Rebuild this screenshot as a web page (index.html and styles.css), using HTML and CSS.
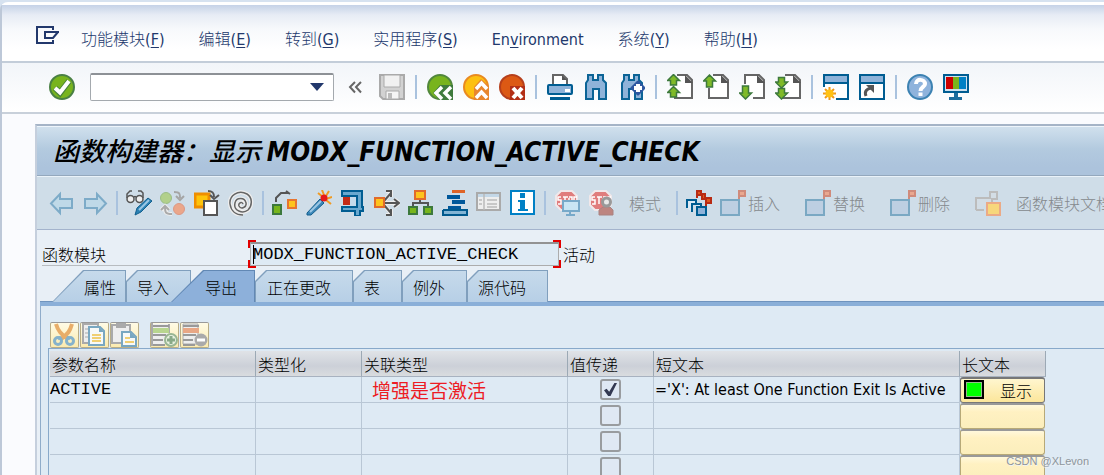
FILE: index.html
```html
<!DOCTYPE html>
<html lang="zh-CN">
<head>
<meta charset="utf-8">
<title>函数构建器</title>
<link rel="stylesheet" href="styles.css">
</head>
<body>
<svg class="defs" aria-hidden="true">
  <defs>
    <symbol id="page" viewBox="0 0 26 26"><path d="M10 1H20L25 6V24H7" fill="#fff" stroke="#666" stroke-width="2"/><path d="M18 1L26 9H18Z" fill="#555"/></symbol>
    <symbol id="flag" viewBox="0 0 26 26"><rect x="1" y="10" width="18" height="15" fill="#bdcfe2" stroke="#7aa8c3" stroke-width="2"/><path d="M19 9V1H25V6H19" fill="#e9a890" stroke="#d08b7b" stroke-width="2"/></symbol>
    <g id="up"><path d="M6.500 0.500L12.500 6.500H9.500V11H3.500V6.500H0.500Z" fill="#7fba28" stroke="#3d793c" stroke-width="1.500"/></g>
    <g id="down"><path d="M6.500 11L12.500 5H9.500V0.500H3.500V5H0.500Z" fill="#7fba28" stroke="#3d793c" stroke-width="1.500"/></g>
  </defs>
</svg>

<div class="window">
  <nav class="menubar">
    <button class="menu-icon" aria-label="菜单"><svg viewBox="0 0 24 19"><path d="M17 4V1H1V17H17V14M23 6H9V12H17L22 6" fill="none" stroke="#22386c" stroke-width="2"/></svg></button>
    <button>功能模块<span>(<u>F</u>)</span></button>
    <button>编辑<span>(<u>E</u>)</span></button>
    <button>转到<span>(<u>G</u>)</span></button>
    <button>实用程序<span>(<u>S</u>)</span></button>
    <button><span>En<u>v</u>ironment</span></button>
    <button>系统<span>(<u>Y</u>)</span></button>
    <button>帮助<span>(<u>H</u>)</span></button>
  </nav>

  <div class="sysbar">
    <button class="ic" aria-label="确认"><svg viewBox="0 0 26 26"><circle cx="13" cy="13" r="12" fill="#78b41e" stroke="#4a8044" stroke-width="2"/><path d="M6 14L11 19L20 7" fill="none" stroke="#47803b" stroke-width="6"/><path d="M6 14L11 18.500L20 7" fill="none" stroke="#fff" stroke-width="4"/></svg></button>
    <div class="combo"><input aria-label="命令"><button aria-label="历史"><svg viewBox="0 0 14 8"><path d="M0 0H14L7 8Z" fill="#22386c"/></svg></button></div>
    <button class="ic narrow" aria-label="收起"><svg viewBox="0 0 16 26"><path d="M8 8L3 13L8 18.500M14 8L9 13L14 18.500" fill="none" stroke="#666" stroke-width="2"/></svg></button>
    <button class="ic" aria-label="保存"><svg viewBox="0 0 26 26"><path d="M1 1H25V25H4L1 22Z" fill="#d2d2d2" stroke="#aaa" stroke-width="2"/><path d="M5 1H21V13H5Z" fill="#f1f1f1" stroke="#aaa"/><path d="M7 17H20V25H7Z" fill="#f5f5f5" stroke="#aaa"/><path d="M9 19H13V25H9Z" fill="#bbb"/></svg></button>
    <i class="sep"></i>
    <button class="ic" aria-label="返回"><svg viewBox="0 0 26 26"><circle cx="13" cy="13" r="12" fill="#78b41e" stroke="#51873c" stroke-width="2"/><path d="M6 19L13 11H26V26H13Z" fill="#3f7b3d"/><path d="M15 13L9 19L15 25M24 13L18 19L24 25" fill="none" stroke="#fff" stroke-width="3.500"/></svg></button>
    <button class="ic" aria-label="退出"><svg viewBox="0 0 26 26"><circle cx="13" cy="13" r="12" fill="#fdc010" stroke="#e98a20" stroke-width="2"/><path d="M11 13L18 5L26 12V26H11Z" fill="#e8862d"/><path d="M13 15L18.500 9L24 15M13 24L18.500 18L24 24" fill="none" stroke="#fff" stroke-width="3.500"/></svg></button>
    <button class="ic" aria-label="取消"><svg viewBox="0 0 26 26"><circle cx="13" cy="13" r="12" fill="#dc5914" stroke="#b63f1b" stroke-width="2"/><path d="M11 12H26V26H11Z" fill="#b32f16"/><path d="M14 14L23 24M23 14L14 24" stroke="#fff" stroke-width="4"/></svg></button>
    <i class="sep"></i>
    <button class="ic" aria-label="打印"><svg viewBox="0 0 26 26"><path d="M6 10V1H16L20 5V10" fill="#fff" stroke="#666" stroke-width="2"/><path d="M15 1V6H20Z" fill="#555"/><rect x="1" y="11" width="24" height="9" rx="1" fill="#8fb3d9" stroke="#005d92" stroke-width="2"/><path d="M18 15H23V18H18Z" fill="#fff"/><path d="M3 23H23V26H3Z" fill="#005d92"/></svg></button>
    <button class="ic" aria-label="查找"><svg viewBox="0 0 26 26"><path id="bino" d="M5 1H10V6H15V1H20V6L23 9V25H16V15H10V25H3V9L5 6Z" fill="#8fb3d9" stroke="#0c6496" stroke-width="2"/></svg></button>
    <button class="ic" aria-label="继续查找"><svg viewBox="0 0 26 26"><use href="#bino"/><path d="M19 8L25 14L19 20L13 14Z" fill="#fff" stroke="#2d57a0" stroke-width="3" stroke-linejoin="round"/><path d="M19 10V18M15 14H23" stroke="#fff" stroke-width="4"/></svg></button>
    <i class="sep"></i>
    <button class="ic" aria-label="首页"><svg viewBox="0 0 26 26"><use href="#page"/><path d="M4 8H10V14H4Z" fill="#fff"/><use href="#up"/><use href="#up" y="12"/></svg></button>
    <button class="ic" aria-label="上页"><svg viewBox="0 0 26 26"><use href="#page"/><path d="M6 14V24H14" fill="#fff" stroke="#666" stroke-width="2"/><path d="M6.500 1L12.500 7H9.500V13H3.500V7H0.500Z" fill="#7fba28" stroke="#3d793c" stroke-width="1.500"/></svg></button>
    <button class="ic" aria-label="下页"><svg viewBox="0 0 26 26"><path d="M6 10V1H20L25 6V24H14" fill="#fff" stroke="#666" stroke-width="2"/><path d="M18 1L26 9H18Z" fill="#555"/><path d="M6.500 25L12.500 19H9.500V12H3.500V19H0.500Z" fill="#7fba28" stroke="#3d793c" stroke-width="1.500"/></svg></button>
    <button class="ic" aria-label="末页"><svg viewBox="0 0 26 26"><use href="#page"/><path d="M4 8H10V14H4Z" fill="#fff"/><use href="#down" y="3"/><use href="#down" y="14"/></svg></button>
    <i class="sep"></i>
    <button class="ic" aria-label="新会话"><svg viewBox="0 0 26 26"><path d="M1 14V1H25V25H13" fill="#fff" stroke="#005d92" stroke-width="2"/><path d="M2 2H24V9H2Z" fill="#8fb3d9"/><path d="M1 9H25" stroke="#005d92" stroke-width="2"/><path d="M0 13H12V26H0Z" fill="#fff"/><path d="M6.500 13V26M0 19.500H13M2 15L11 24M11 15L2 24" stroke="#f09818" stroke-width="2"/><circle cx="6.500" cy="19.500" r="4" fill="#ffc214"/></svg></button>
    <button class="ic" aria-label="快捷方式"><svg viewBox="0 0 26 26"><path d="M1 1H25V25H1Z" fill="#fff" stroke="#005d92" stroke-width="2"/><path d="M2 2H24V8H2Z" fill="#8fb3d9"/><path d="M1 9H25" stroke="#005d92" stroke-width="2"/><path d="M7 22C5 17 8 15 12 14" fill="none" stroke="#555" stroke-width="3"/><path d="M7 11H15V19Z" fill="#555"/></svg></button>
    <i class="sep"></i>
    <button class="ic" aria-label="帮助"><svg viewBox="0 0 26 26"><circle cx="13" cy="13" r="12" fill="#8fb3dc" stroke="#3c82b2" stroke-width="2"/><path d="M9 10C9 4 18 5 18 10C18 13 13.500 13 13.500 17M13.500 18.500V22" fill="none" stroke="#fff" stroke-width="4"/></svg></button>
    <button class="ic" aria-label="布局"><svg viewBox="0 0 26 26"><path d="M1 1H25V18H1Z" fill="#cfe1ef" stroke="#005d92" stroke-width="2"/><path d="M3 3H10V15H3Z" fill="#c00"/><path d="M10 3H16V15H10Z" fill="#7ab51d"/><path d="M16 3H23V15H16Z" fill="#0080c5"/><path d="M11 19H15V23H19V26H6V23H11Z" fill="#1d6d9e"/></svg></button>
  </div>

  <main class="main">
    <h1>函数构建器：显示 <span>MODX_FUNCTION_ACTIVE_CHECK</span></h1>

    <div class="appbar">
      <button class="ic" aria-label="后退"><svg viewBox="0 0 26 26"><path d="M3 13.500L12 4V9H24V18H12V23Z" fill="#bfd9e8" stroke="#7dabc8" stroke-width="2"/></svg></button>
      <button class="ic" aria-label="前进"><svg viewBox="0 0 26 26"><path d="M24 13.500L15 4V9H3V18H15V23Z" fill="#bfd9e8" stroke="#7dabc8" stroke-width="2"/></svg></button>
      <i class="sep"></i>
      <button class="ic" aria-label="显示/更改"><svg viewBox="0 0 26 26"><g fill="#eee" stroke="#555" stroke-width="1.500"><path d="M1 8V4L4 1H6M17 8V3L15 1H12M7 8Q9 5 11 8" fill="none"/><circle cx="4.500" cy="9" r="3.500"/><circle cx="13.500" cy="9" r="3.500"/></g><path d="M9 25L11 18L22 8L26 11L15 22Z" fill="#2c82b4" stroke="#135f8e"/><path d="M13 20L23 10" stroke="#9cc7e4" stroke-width="2"/></svg></button>
      <button class="ic" aria-label="激活切换"><svg viewBox="0 0 26 26"><circle cx="6" cy="8" r="5.500" fill="#b2d08b" stroke="#9bbd86"/><circle cx="19" cy="19" r="5.500" fill="#eba68a" stroke="#dc9885"/><path d="M14 2C20 2 20 4 20 8M16 6L20 10L24 6" fill="none" stroke="#a5a5a5" stroke-width="2"/><path d="M12 24C5 24 5 22 5 17M1 20L5 16L9 20" fill="none" stroke="#eee" stroke-width="4"/><path d="M12 24C5 24 5 22 5 17M1 20L5 16L9 20" fill="none" stroke="#aaa" stroke-width="2"/></svg></button>
      <button class="ic" aria-label="其他对象"><svg viewBox="0 0 26 26"><path d="M1 4H15V17H1Z" fill="#fec40b" stroke="#ef8e00" stroke-width="3"/><path d="M10 11H23V25H10Z" fill="#fff" stroke="#555" stroke-width="2"/><path d="M14 1C19 1 20 3 20 7M16 5L20 9L25 5" fill="none" stroke="#555" stroke-width="2"/></svg></button>
      <button class="ic" aria-label="增强"><svg viewBox="0 0 26 26"><path d="M15 14C14 11 10 13 11 16C13 20 19 17 18 13C17 7 8 7 7 13C5 21 15 24 20 20C25 15 24 7 19 4C10 -1 1 6 2 14C3 21 8 25 15 25" fill="none" stroke="#eee" stroke-width="4"/><path d="M15 14C14 11 10 13 11 16C13 20 19 17 18 13C17 7 8 7 7 13C5 21 15 24 20 20C25 15 24 7 19 4C10 -1 1 6 2 14C3 21 8 25 15 25" fill="none" stroke="#666" stroke-width="1.500"/></svg></button>
      <i class="sep"></i>
      <button class="ic" aria-label="检查"><svg viewBox="0 0 26 26"><path d="M1 15H9V24H1Z" fill="#77b51c" stroke="#3d793c" stroke-width="2"/><path d="M16 10H24V18H16Z" fill="#fec41d" stroke="#e77530" stroke-width="2"/><path d="M4 12V8L9 3H17M14 1L18 4" fill="none" stroke="#555" stroke-width="2"/></svg></button>
      <button class="ic" aria-label="激活"><svg viewBox="0 0 26 26"><path d="M1 23L14 9L18 13L5 25H1Z" fill="#3b87b8" stroke="#135f8e"/><path d="M4 22L15 11" stroke="#9bc6e3" stroke-width="2"/><path d="M16 0L18 5M23 1L20 6M12 3L17 7M26 7L20 9M25 14L20 10" stroke="#f19a20" stroke-width="2"/><circle cx="18" cy="8" r="3.500" fill="#e51919"/></svg></button>
      <button class="ic" aria-label="测试"><svg viewBox="0 0 26 26"><path d="M2 1H22V17H23V21H20V26H15V21H2V17H17V6H2Z" fill="#69a8cf" stroke="#005d92" stroke-width="2"/><path d="M3 7H10V15H3Z" fill="#c42b16"/><path d="M10 7H16V16H10Z" fill="#c4daeb"/></svg></button>
      <button class="ic" aria-label="使用位置"><svg viewBox="0 0 26 26"><path d="M9 13H24M20 9L25 13L20 17M10 11L17 3M12 1H17V7M10 15L17 23M12 25H17V19" fill="none" stroke="#eee" stroke-width="4"/><path d="M9 13H24M20 9L25 13L20 17M10 11L17 3M12 1H17V7M10 15L17 23M12 25H17V19" fill="none" stroke="#555" stroke-width="2"/><path d="M1 8H10V17H1Z" fill="#fec41d" stroke="#e16b2b" stroke-width="2"/></svg></button>
      <button class="ic" aria-label="层次"><svg viewBox="0 0 26 26"><path d="M12 10V13M5 17V13H20V17" fill="none" stroke="#555" stroke-width="2"/><path d="M7 1H17V9H7Z" fill="#fec41d" stroke="#e16b2b" stroke-width="2"/><path d="M1 17H9V24H1ZM16 17H24V24H16Z" fill="#78b51c" stroke="#3d793c" stroke-width="2"/></svg></button>
      <button class="ic" aria-label="排列"><svg viewBox="0 0 26 26"><path d="M10 0H23V3H10Z" fill="#df6427"/><path d="M5 5H18V9H5ZM10 10H23V14H10ZM6 16H19V19H6Z" fill="#00579a"/><path d="M1 20V25H25V20H1" fill="#82b4d4" stroke="#00598d" stroke-width="2"/></svg></button>
      <button class="ic" aria-label="列表"><svg viewBox="0 0 26 26"><path d="M1 3H24V20H1Z" fill="#eee" stroke="#aaa" stroke-width="2"/><path d="M2 4H23V7H2Z" fill="#c3d7e7"/><path d="M8 4V20M3 10H6M3 14H6M11 10H21M11 14H21M11 17H21" stroke="#bbb" stroke-width="1.500"/></svg></button>
      <button class="ic" aria-label="信息"><svg viewBox="0 0 26 26"><path d="M1 1H24V24H1Z" fill="#fff" stroke="#0080c5" stroke-width="2"/><path d="M10 3H15V8H10ZM8 10H15V19H18V21H8V19H10V12H8Z" fill="#0080c5"/></svg></button>
      <i class="sep"></i>
      <button class="ic" aria-label="断点"><svg viewBox="0 0 26 26"><path id="stop" d="M7 1H18L23 6V15L18 20H7L2 15V6Z" fill="#e07d7d" stroke="#f1e8ea" stroke-width="2"/><path id="stoplines" d="M7 7H4V10H7V14H4M9 7H14M11 7V14M15 8V14H18V7H15M20 14V7H23" fill="none" stroke="#fff" stroke-width="1.500"/><path d="M9 11H25V21H9Z" fill="#c9e5f4" stroke="#78a9c9" stroke-width="2"/><path d="M16 22V25M12 25H21" stroke="#78a9c9" stroke-width="2"/></svg></button>
      <button class="ic" aria-label="外部断点"><svg viewBox="0 0 26 26"><use href="#stop"/><use href="#stoplines"/><path d="M11 25V20L15 17H22L25 20V25Z" fill="#bd8580" stroke="#a98280"/><circle cx="18.500" cy="12" r="4" fill="#e8e8e8" stroke="#999" stroke-width="3"/></svg></button>
      <button class="word mode">模式</button>
      <i class="sep"></i>
      <button class="ic" aria-label="标记"><svg viewBox="0 0 26 26"><path d="M11 8V1H15V4H19V8H25V13H20V9H16V5H12" fill="#df571c" stroke="#b82b13" stroke-width="2"/><path d="M20 13V18" stroke="#b82b13" stroke-width="2"/><path d="M1 18V10H10V14H6V22M6 14H15V17" fill="#dceaf5" stroke="#005d92" stroke-width="2"/><path d="M11 17H20V25H11Z" fill="#8fb3d9" stroke="#005d92" stroke-width="2"/></svg></button>
      <button class="word pattern"><svg><use href="#flag"/></svg>插入</button>
      <button class="word pattern"><svg><use href="#flag"/></svg>替换</button>
      <button class="word pattern"><svg><use href="#flag"/></svg>删除</button>
      <button class="word doc"><svg viewBox="0 0 26 26"><path d="M1 20V8H15V2H22V9H17V12M1 20H9" fill="#d3dde5" stroke="#bcbcbc" stroke-width="2"/><path d="M12 13H25V25H12Z" fill="#f7d77c" stroke="#ebaa86" stroke-width="2"/></svg>函数模块文档</button>
    </div>

    <section class="content">
      <div class="field-row">
        <label for="module">函数模块</label>
        <div class="focus-box"><input id="module" value="MODX_FUNCTION_ACTIVE_CHECK" readonly><i class="caret"></i></div>
        <span>活动</span>
      </div>

      <div class="tabs" role="tablist">
        <button class="tab first" role="tab">属性</button>
        <button class="tab second" role="tab">导入</button>
        <button class="tab active" role="tab" aria-selected="true">导出</button>
        <button class="tab wide" role="tab">正在更改</button>
        <button class="tab short" role="tab">表</button>
        <button class="tab" role="tab">例外</button>
        <button class="tab last" role="tab">源代码</button>
      </div>

      <div class="panel">
        <div class="tools">
          <button aria-label="剪切"><svg viewBox="0 0 27 24"><path d="M5 1C7 8 10 11 17 16M21 1C19 8 17 11 10 16" fill="none" stroke="#e8ad69" stroke-width="4"/><path d="M10 14L7 16M16 14L19 16" stroke="#7eaec5" stroke-width="3"/><circle cx="7" cy="18" r="3.500" fill="none" stroke="#85b2cb" stroke-width="3"/><circle cx="19" cy="18" r="3.500" fill="none" stroke="#85b2cb" stroke-width="3"/></svg></button>
          <button aria-label="复制"><svg viewBox="0 0 27 24"><path d="M2 1H17V20H2Z" fill="#eee" stroke="#aaa" stroke-width="2"/><path d="M4 6H7M4 10H7M4 14H7" stroke="#aaa"/><path d="M8 4H19L23 8V22H8Z" fill="#f7f9f8" stroke="#78a7c1" stroke-width="2"/><path d="M18 4V9H23Z" fill="#78a7c1"/><path d="M11 12H20M11 15H20M11 18H20" stroke="#f0cf72" stroke-width="2"/></svg></button>
          <button aria-label="粘贴"><svg viewBox="0 0 27 24"><path d="M1 2H19V20H1Z" fill="#eee" stroke="#aaa" stroke-width="2"/><path d="M5 0H15V5H5Z" fill="#aaa"/><path d="M11 9H20L25 14V23H11Z" fill="#f7f9f8" stroke="#78a7c1" stroke-width="2"/><path d="M19 9V15H25Z" fill="#78a7c1"/><path d="M14 15H19M14 19H23" stroke="#f0cf72" stroke-width="2"/></svg></button>
          <button class="gap" aria-label="插入行"><svg viewBox="0 0 27 24"><path d="M1 0V22H13M18 1V10" fill="none" stroke="#aaa" stroke-width="2"/><path d="M2 1H17V21H2Z" fill="#eee"/><path d="M2 5H18V10H2Z" fill="#b8d58f"/><path d="M2 3H18M2 12H15M2 17H12M2 22H14" stroke="#999" stroke-width="2"/><circle cx="20" cy="17" r="6" fill="#e7f0df" stroke="#99b693" stroke-width="2"/><path d="M20 13V21M16 17H24" stroke="#88a987" stroke-width="3"/></svg></button>
          <button aria-label="删除行"><svg viewBox="0 0 27 24"><path d="M2 1H17V21H2Z" fill="#eee" stroke="#aaa"/><path d="M2 5H18V10H2Z" fill="#e8a785"/><path d="M2 3H18M2 12H15M2 17H12M2 22H14" stroke="#999" stroke-width="2"/><circle cx="20" cy="17" r="6.500" fill="#aaa"/><path d="M16 17H24" stroke="#fff" stroke-width="3"/></svg></button>
        </div>

        <div class="grid">
          <table>
            <colgroup><col class="c-name"><col class="c-type"><col class="c-name"><col class="c-check"><col class="c-text"><col class="c-long"></colgroup>
            <thead><tr><th>参数名称</th><th>类型化</th><th>关联类型</th><th>值传递</th><th>短文本</th><th>长文本</th></tr></thead>
            <tbody>
              <tr><td class="mono">ACTIVE</td><td></td><td class="note">增强是否激活</td><td class="tick"><input type="checkbox" checked aria-label="值传递 1"></td><td class="desc">='X': At least One Function Exit Is Active</td><td class="act"><button class="on"><i></i>显示</button></td></tr>
              <tr><td></td><td></td><td></td><td class="tick"><input type="checkbox" aria-label="值传递 2"></td><td></td><td class="act"><button aria-label="长文本 2"></button></td></tr>
              <tr><td></td><td></td><td></td><td class="tick"><input type="checkbox" aria-label="值传递 3"></td><td></td><td class="act"><button aria-label="长文本 3"></button></td></tr>
              <tr><td></td><td></td><td></td><td class="tick"><input type="checkbox" aria-label="值传递 4"></td><td></td><td class="act"><button aria-label="长文本 4"></button></td></tr>
            </tbody>
          </table>
        </div>
      </div>
    </section>
  </main>
</div>
<div class="watermark">CSDN @XLevon</div>
</body>
</html>
```
FILE: styles.css
```css
* { box-sizing: border-box; }
body {
  margin: 0;
  height: 100vh;
  overflow: hidden;
  position: relative;
  background: #d6e2f0;
  font: 16px/20px "Noto Sans CJK SC", sans-serif;
  font-weight: 300;
  color: #000;
}
button {
  margin: 0;
  padding: 0;
  border: 0;
  background: none;
  font: inherit;
  color: inherit;
  white-space: nowrap;
}
svg { display: block; }
.defs { position: absolute; width: 0; height: 0; }

.window {
  margin-top: 2px;
  border-left: 2px solid #bdc8d8;
  border-top: 3px solid #fff;
  border-top-left-radius: 8px;
  background: #fafbfe;
}

.menubar {
  display: flex;
  align-items: center;
  gap: 34px;
  height: 58px;
  padding: 12px 0 0 34px;
  border-bottom: 2px solid #c3cdd9;
  background: linear-gradient(#c5d2e7, #e7ecf5 10px, #f7f9fc 24px, #fff 44px);
  color: #22386c;
}
.menubar span { font: 16px/20px "DejaVu Sans Condensed", "Noto Sans", sans-serif; }
.menubar u { text-underline-offset: 2px; }
.menu-icon { margin: -8px -13px 0 0; }
.menu-icon svg { width: 24px; height: 19px; }

.sysbar {
  display: flex;
  align-items: center;
  gap: 10px;
  height: 51px;
  padding: 0 0 2px 47px;
  border-bottom: 2px solid #c8d0da;
  background: linear-gradient(#f2f5f9, #fff);
}
.ic { flex: none; width: 26px; height: 26px; }
.ic svg { width: 100%; height: 26px; }
.narrow { width: 16px; margin: 0 6px 0 3px; }
.sep { flex: none; width: 2px; height: 24px; background: #a9c2de; }
.combo {
  display: flex;
  align-items: center;
  width: 244px;
  height: 28px;
  margin-left: 5px;
  border: 1px solid #a4a9ae;
  border-top: 2px solid #8d9196;
  border-radius: 2px;
  background: #fff;
}
.combo input { flex: 1; min-width: 0; border: 0; outline: 0; background: none; font: inherit; }
.combo button { width: 14px; margin-right: 9px; }
.combo svg { width: 14px; height: 8px; }

.main {
  margin: 10px 0 0 33px;
  border-left: 2px solid #c5cfdd;
  border-top: 2px solid #a5b4c7;
  background: #e8eff6;
}
h1 {
  margin: 0;
  height: 50px;
  padding: 0 0 0 16px;
  overflow: hidden;
  border-top: 1px solid #eef5fb;
  border-bottom: 1px solid #94a8bd;
  background: linear-gradient(#d0e0ed, #b3cadf 22px, #acc3dc 40px);
  font: italic 500 26px/46px "Noto Sans CJK SC", sans-serif;
  white-space: nowrap;
}
h1 span { font: italic bold 26px/46px "DejaVu Sans Condensed", "Noto Sans", sans-serif; }
.appbar {
  display: flex;
  align-items: center;
  gap: 8px;
  height: 54px;
  padding: 0 0 0 11px;
  overflow: hidden;
  border-top: 1px solid #eaf2f9;
  border-bottom: 1px solid #a3b3cc;
  background: #cfdde8;
}
.word { flex: none; display: flex; align-items: center; color: #85898d; }
.mode { margin: 0 7px; }
.pattern { width: 77px; gap: 2px; }
.doc { gap: 15px; }
.word svg { width: 26px; height: 26px; }

.content { padding-left: 3px; }
.field-row {
  display: flex;
  align-items: center;
  height: 40px;
  padding: 9px 0 1px 2px;
}
.field-row label { width: 206px; height: 24px; padding-top: 2px; border-bottom: 1px solid #b8bcc0; }
.field-row span { padding-left: 2px; }
.focus-box {
  position: relative;
  width: 313px;
  height: 28px;
  padding: 2px;
  background:
    linear-gradient(#e10000, #e10000) 0 0 / 8px 2px,
    linear-gradient(#e10000, #e10000) 0 0 / 2px 8px,
    linear-gradient(#e10000, #e10000) 100% 0 / 8px 2px,
    linear-gradient(#e10000, #e10000) 100% 0 / 2px 8px,
    linear-gradient(#e10000, #e10000) 0 100% / 8px 2px,
    linear-gradient(#e10000, #e10000) 0 100% / 2px 8px,
    linear-gradient(#e10000, #e10000) 100% 100% / 8px 2px,
    linear-gradient(#e10000, #e10000) 100% 100% / 2px 8px;
  background-repeat: no-repeat;
}
.focus-box input {
  display: block;
  width: 100%;
  height: 24px;
  padding: 0 2px;
  border: 1px solid #acacac;
  border-top: 2px solid #929292;
  outline: 0;
  background: #deeaf4;
  font: 17px/20px "Liberation Mono", monospace;
}
.caret { position: absolute; left: 5px; top: 5px; width: 1px; height: 19px; background: #000; }

.tabs {
  display: flex;
  height: 36px;
  padding-left: 12px;
  border-bottom: 4px solid #8aafd8;
  box-shadow: inset 0 -1px #6f94be, 0 1px #6a8fb7;
}
.tab {
  position: relative;
  z-index: 0;
  width: 65px;
  height: 32px;
  padding: 2px 0 0 11px;
  text-align: left;
  --cut: 11px;
  --drop: 11px;
  --line: #809fbd;
  --fill: linear-gradient(#c6daeb, #b7cfe6);
}
.tab::before, .tab::after {
  content: "";
  position: absolute;
  z-index: -1;
  inset: 0;
  background: var(--line);
  clip-path: polygon(0 100%, 0 var(--drop), var(--cut) 0, 100% 0, 100% 100%);
}
.tab::after { inset: 1px 1px 0 1px; background: var(--fill); }
.first { width: 74px; padding-left: 32px; --cut: 31px; --drop: 100%; }
.second { width: 65px; }
.active {
  z-index: 1;
  width: 84px;
  margin-left: -20px;
  padding-left: 34px;
  --cut: 32px;
  --drop: 100%;
  --line: #6288b4;
  --fill: #8db0da;
}
.wide { width: 98px; padding-left: 12px; }
.short { width: 49px; }
.last { width: 81px; }

.panel {
  padding: 16px 0 0 7px;
  border-left: 1px solid #8facca;
  background: #deeaf4;
}
.tools { display: flex; gap: 1px; padding-left: 2px; }
.tools button {
  width: 29px;
  height: 26px;
  border: 1px solid #b8ad87;
  border-top-color: #999;
  border-radius: 2px;
  background: linear-gradient(#fffbe5, #fbebb0);
}
.tools svg { width: 27px; height: 24px; }
.tools .gap { margin-left: 10px; }

.grid { padding: 2px 0 0 1px; border-top: 1px solid #88a9ca; border-left: 1px solid #88a9ca; }
table { width: 996px; border-collapse: separate; border-spacing: 0; table-layout: fixed; }
.c-name { width: 206px; }
.c-type { width: 106px; }
.c-check { width: 86px; }
.c-text { width: 306px; }
.c-long { width: 86px; }
th, td {
  height: 26px;
  padding: 0;
  border-right: 1px solid #b9c7d5;
  border-bottom: 1px solid #b9c7d5;
  line-height: 20px;
  white-space: nowrap;
}
th {
  padding: 0 0 0 2px;
  border-right-color: #9ca9b5;
  border-bottom-color: #a8b2c0;
  background: linear-gradient(#e0e3e7, #ccd0d8 60%, #d9dcdf);
  font-weight: 300;
  text-align: left;
}
.mono { font: 17px/20px "Liberation Mono", monospace; }
.note { padding-left: 10px; color: #ed1c24; font-size: 19px; font-weight: 400; }
.desc { padding-left: 1px; font: 16px/20px "DejaVu Sans Condensed", "Noto Sans", sans-serif; }
.tick { text-align: center; }
.tick input {
  appearance: none;
  display: block;
  width: 21px;
  height: 21px;
  margin: 2px auto;
  border: 2px solid #999c9f;
  border-radius: 3px;
  background: #dfe8f3;
}
.tick input:checked::before {
  content: "";
  display: block;
  width: 13px;
  height: 13px;
  margin: 2px;
  background: #333952;
  clip-path: polygon(0 55%, 20% 45%, 40% 68%, 80% 0, 100% 0, 50% 100%, 32% 100%);
}
.act { border-bottom: 0; border-right: 0; vertical-align: top; }
.act button {
  display: flex;
  align-items: center;
  width: 85px;
  height: 26px;
  border: 1px solid #b7a978;
  border-top: 2px solid #999;
  border-radius: 3px;
  background: linear-gradient(#fff8dc, #fff1c2 30%, #fbeebc);
}
.act .on { gap: 16px; padding: 0 0 2px 3px; border-color: #777; background: linear-gradient(#fff6cf, #fce69b); }
.act i { width: 20px; height: 19px; border: 2px solid #000; background: #0f0; box-shadow: inset 0 0 0 1px #95bd8c; }

.watermark {
  position: absolute;
  right: 15px;
  bottom: 5px;
  color: #8d959c;
  font: 11px/18px "Liberation Sans", sans-serif;
  text-shadow: 1px 1px #eef2f4;
}
```
